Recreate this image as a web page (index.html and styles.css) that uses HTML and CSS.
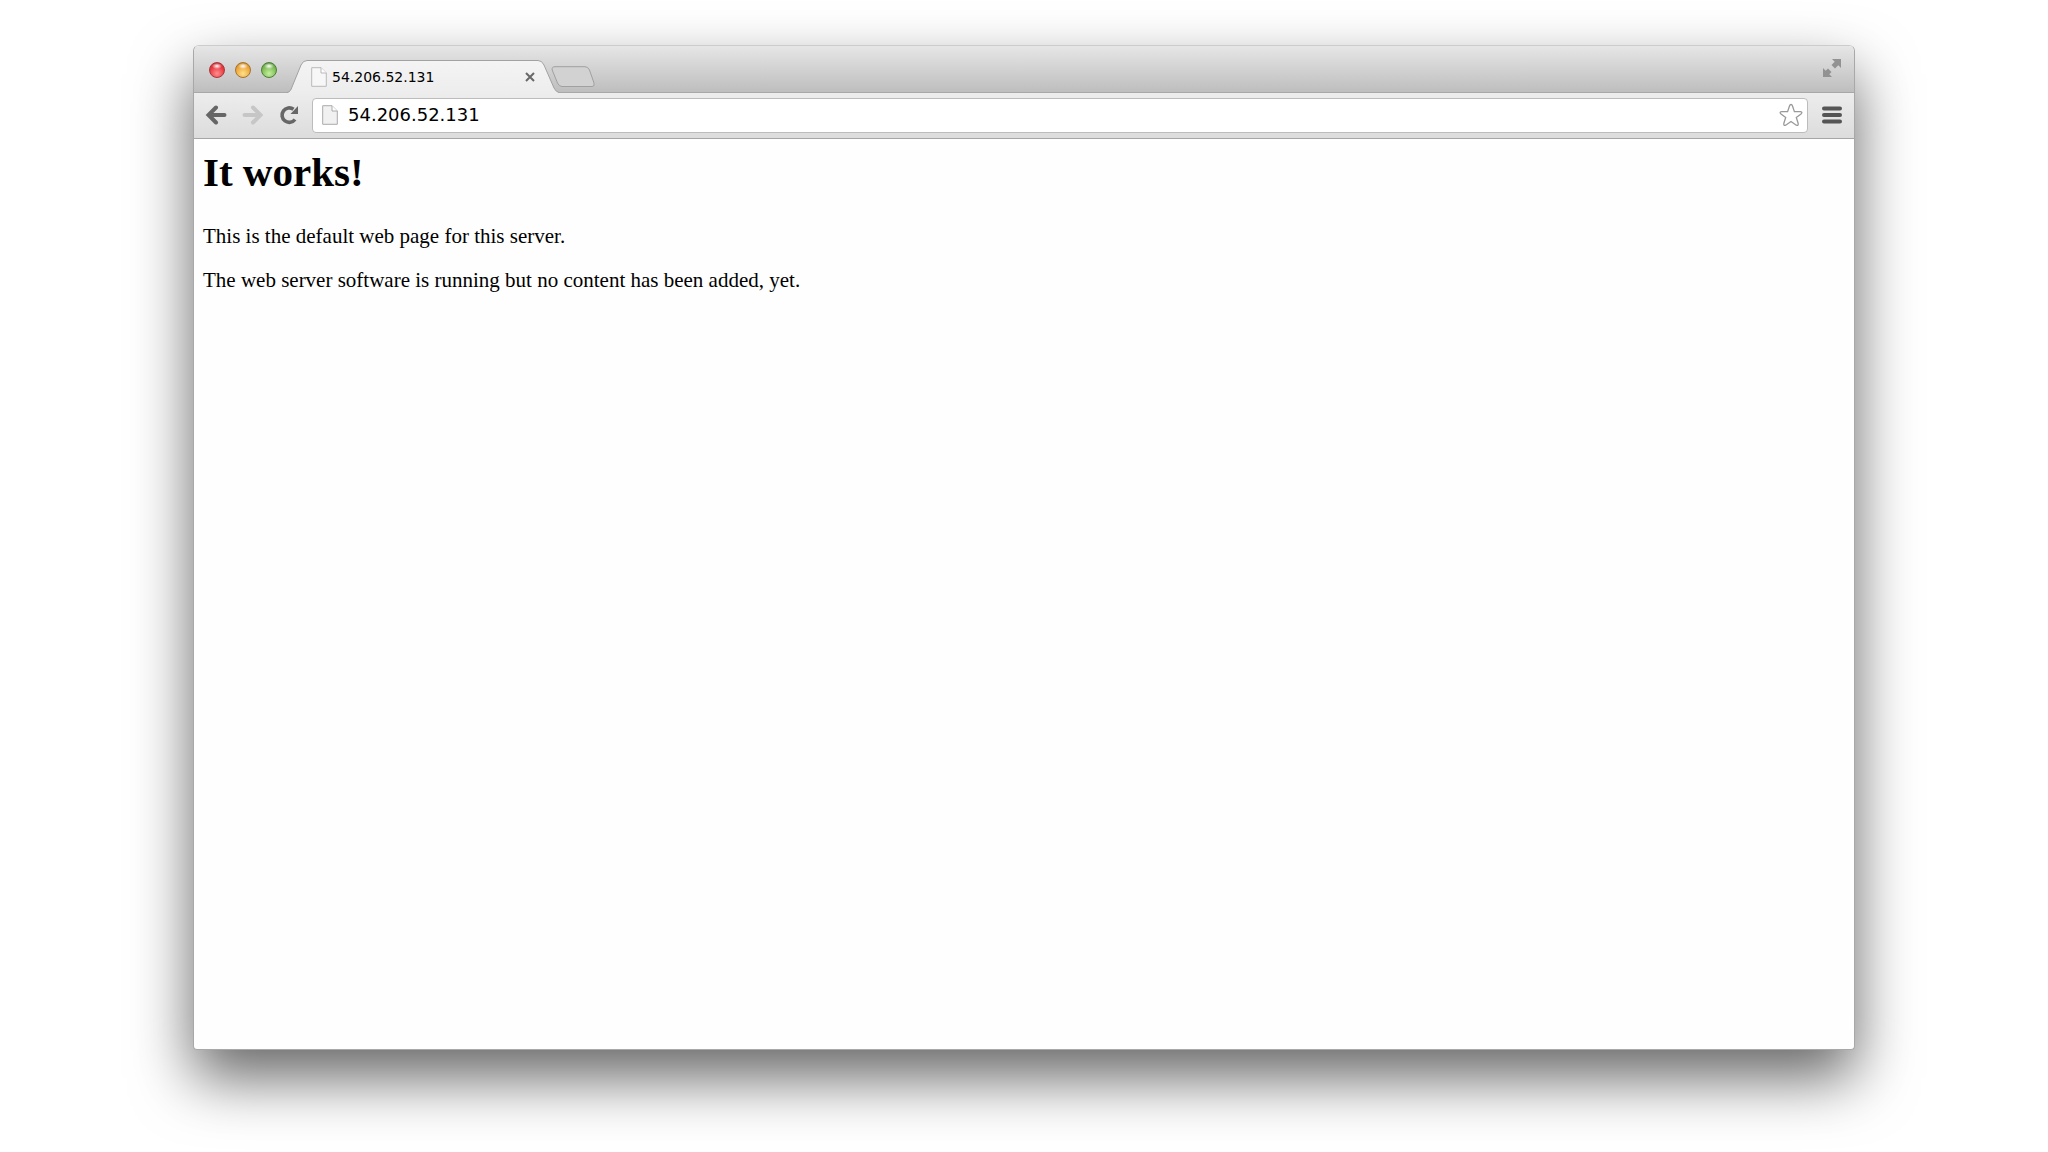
FILE: index.html
```
<!DOCTYPE html>
<html lang="en">
<head>
<meta charset="utf-8">
<title>54.206.52.131</title>
<link rel="stylesheet" href="styles.css">
</head>
<body>
<div class="window">
  <header class="titlebar">
    <div class="lights">
      <button class="light red" aria-label="Close"></button>
      <button class="light amber" aria-label="Minimize"></button>
      <button class="light green" aria-label="Zoom"></button>
    </div>
    <div class="tab">
      <svg class="tab-shape" viewBox="0 0 272 33" aria-hidden="true">
        <defs><linearGradient id="tabfill" x1="0" y1="0" x2="0" y2="1"><stop offset="0" stop-color="#f4f4f4"/><stop offset="1" stop-color="#ededed"/></linearGradient></defs>
        <path d="M0 33C3 32 4 30 5 27L14 5Q16 .5 20 .5H251Q255 .5 257 5L267 28Q269 32 272 33Z" fill="url(#tabfill)"/>
        <path d="M0 32.500C3 32 4 30 5 27L14 5Q16 .5 20 .5H251Q255 .5 257 5L267 28Q269 32 272 32.500" fill="none" stroke="#a2a2a2"/>
      </svg>
      <svg class="page-icon" viewBox="0 0 16 20" aria-hidden="true"><path d="M.7.7H10L15.300 6V19.300H.7Z" fill="#f7f7f7" stroke="#b9b9b9"/><path d="M10 .7V6H15.300" fill="#fff" stroke="#b9b9b9"/></svg>
      <span class="tab-title">54.206.52.131</span>
      <button class="tab-close" aria-label="Close tab"><svg viewBox="0 0 10 10"><path d="M1 1L9 9M9 1L1 9" stroke="#686868" stroke-width="2"/></svg></button>
    </div>
    <button class="new-tab" aria-label="New tab"><svg viewBox="0 0 44 22"><path d="M4 .7H34Q37 .7 38.500 4L43 17Q44 20.500 41 20.500H11Q8 20.500 6.500 17L1.200 4Q.5.7 4 .7Z" fill="#d2d2d2" stroke="#a0a0a0"/></svg></button>
    <button class="expand" aria-label="Full screen"><svg viewBox="0 0 20 20"><path d="M10 1H19V10L16.300 7.300L13 10.500L9.500 7L12.700 3.700ZM1 10L3.700 12.700L6 10.400L9.500 13.900L7.300 16.300L10 19H1Z" fill="#929292"/></svg></button>
  </header>
  <nav class="toolbar">
    <button class="tool" aria-label="Back"><svg viewBox="0 0 22 20"><path d="M11 2.500L3.500 10L11 17.500M4 10H19.500" fill="none" stroke="#666" stroke-width="4" stroke-linecap="round"/></svg></button>
    <button class="tool" aria-label="Forward"><svg viewBox="0 0 22 20"><path d="M11 2.500L18.500 10L11 17.500M18 10H2.500" fill="none" stroke="#c6c6c6" stroke-width="4" stroke-linecap="round"/></svg></button>
    <button class="tool" aria-label="Reload"><svg viewBox="0 0 22 20"><path d="M16 14.500A7.200 7.200 0 1 1 14.500 4.300" fill="none" stroke="#666" stroke-width="3.600"/><path d="M19 1V9H11.500Z" fill="#666"/></svg></button>
    <form class="address">
      <svg class="page-icon" viewBox="0 0 16 20" aria-hidden="true"><path d="M.7.7H10L15.300 6V19.300H.7Z" fill="#f1f1f1" stroke="#aaa"/><path d="M10 .7V6H15.300" fill="#fff" stroke="#aaa"/></svg>
      <input class="url" type="text" value="54.206.52.131" aria-label="Address">
      <button class="star" type="button" aria-label="Bookmark"><svg viewBox="0 0 24 24"><path d="M12 1.500Q13 1.500 13.500 3L15.400 8.600H21.500Q24 9.200 22 11L17.300 14.500L19.200 20.500Q19.500 23 17.300 22.200L12 18.500L6.700 22.200Q4.500 23 4.800 20.500L6.700 14.500L2 11Q0 9.200 2.500 8.600H8.600L10.500 3Q11 1.500 12 1.500Z" fill="#fff" stroke="#999" stroke-width="1.300"/></svg></button>
    </form>
    <button class="menu" aria-label="Menu"><svg viewBox="0 0 20 20"><path d="M2 3.500H18M2 10H18M2 16.500H18" stroke="#555" stroke-width="4" stroke-linecap="round"/></svg></button>
  </nav>
  <main class="page">
    <h1>It works!</h1>
    <p>This is the default web page for this server.</p>
    <p>The web server software is running but no content has been added, yet.</p>
  </main>
</div>
</body>
</html>
```
FILE: styles.css
```
* { box-sizing: border-box; }
body {
  margin: 0;
  min-height: 100vh;
  padding: 45px 193px 102px;
  display: flex;
  flex-direction: column;
  background: #fff;
  font-family: "DejaVu Sans", sans-serif;
  color: #000;
}
button { padding: 0; border: 0; background: none; flex: none; }
svg { display: block; width: 100%; height: 100%; }
.window {
  flex: 1;
  display: flex;
  flex-direction: column;
  border: 1px solid #a8a8a8;
  border-top-color: #ccc;
  border-radius: 6px 6px 4px 4px;
  background: #fefefe;
  box-shadow: 0 28px 60px rgba(3, 0, 3, .6);
}
.titlebar {
  display: flex;
  align-items: flex-end;
  height: 47px;
  padding: 0 12px 0 15px;
  border-radius: 5px 5px 0 0;
  background: linear-gradient(#e6e6e6, #bdbdbd);
  box-shadow: inset 0 -1px #a8a8a8;
}
.lights { display: flex; gap: 10px; padding-bottom: 15px; }
.light {
  width: 16px;
  height: 16px;
  border-radius: 50%;
  border: 1px solid;
}
.red { border-color: #a8363c; background: radial-gradient(ellipse 5px 3px at 50% 22%, #fff, transparent), radial-gradient(circle at 50% 75%, #ff8e8c, #e8383f 60%, #b3272e); }
.amber { border-color: #a67429; background: radial-gradient(ellipse 5px 3px at 50% 22%, #fff, transparent), radial-gradient(circle at 50% 75%, #ffe08a, #eda53a 60%, #b8741f); }
.green { border-color: #4c7f34; background: radial-gradient(ellipse 5px 3px at 50% 22%, #fff, transparent), radial-gradient(circle at 50% 75%, #c4f09c, #7cbb56 60%, #4d8733); }
.tab {
  position: relative;
  display: flex;
  align-items: center;
  width: 272px;
  height: 33px;
  margin-left: 10px;
  padding: 0 24px;
}
.tab-shape { position: absolute; inset: 0; }
.page-icon { position: relative; flex: none; width: 16px; height: 20px; }
.tab-title { position: relative; flex: 1; margin-left: 5px; font-size: 14px; line-height: 20px; }
.tab-close { position: relative; width: 10px; height: 10px; }
.new-tab { width: 44px; height: 22px; margin: 0 0 5px -8px; position: relative; }
.expand { width: 20px; height: 20px; margin: 0 0 15px auto; }
.toolbar {
  display: flex;
  align-items: center;
  height: 46px;
  padding: 0 12px 1px 11px;
  background: linear-gradient(#ededed, #dcdcdc);
  border-bottom: 1px solid #a6a6a6;
}
.tool { width: 22px; height: 20px; margin-right: 15px; }
.address {
  flex: 1;
  display: flex;
  align-items: center;
  height: 35px;
  margin: 0 14px 0 -4px;
  padding: 0 4px 0 9px;
  border: 1px solid #bcbcbc;
  border-radius: 4px;
  background: #fff;
}
.url {
  flex: 1;
  min-width: 0;
  margin-left: 10px;
  padding: 0;
  border: 0;
  outline: 0;
  background: none;
  font: 18px/24px "DejaVu Sans", sans-serif;
  color: #000;
}
.star { width: 24px; height: 24px; }
.menu { width: 20px; height: 20px; }
.page { padding: 9px; font-family: "Liberation Serif", serif; }
h1 { margin: 0 0 28px; font-size: 41px; line-height: 48px; }
p { margin: 0 0 20px; font-size: 21px; line-height: 24px; }
```
